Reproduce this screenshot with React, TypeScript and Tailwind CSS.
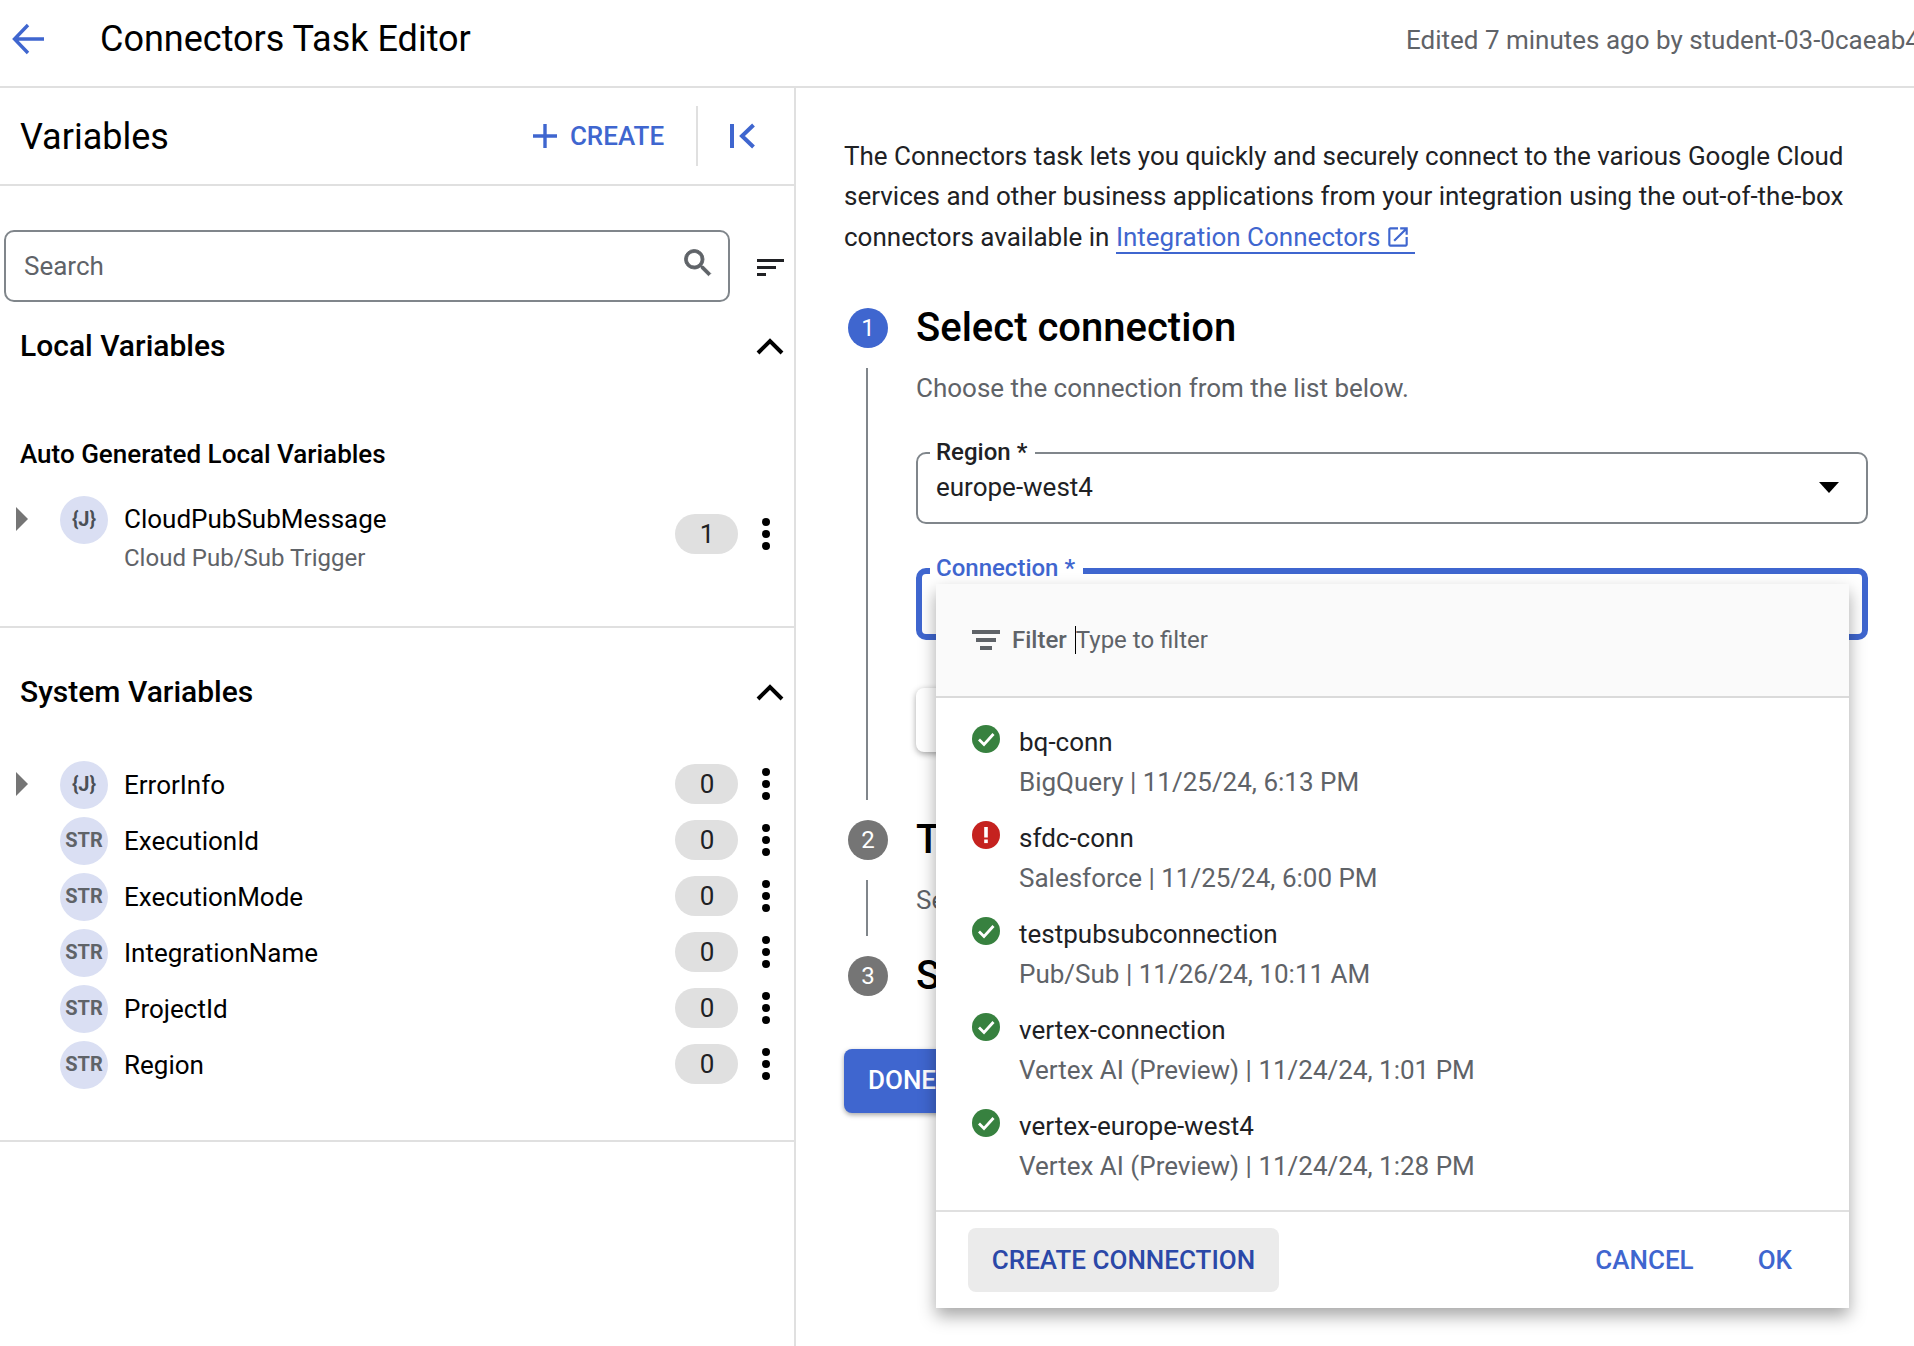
import { ReactNode } from 'react';

const systemVars = [
  { type: 'json', name: 'ErrorInfo' },
  { type: 'str', name: 'ExecutionId' },
  { type: 'str', name: 'ExecutionMode' },
  { type: 'str', name: 'IntegrationName' },
  { type: 'str', name: 'ProjectId' },
  { type: 'str', name: 'Region' },
];

const connections = [
  { name: 'bq-conn', detail: 'BigQuery | 11/25/24, 6:13 PM', ok: true },
  { name: 'sfdc-conn', detail: 'Salesforce | 11/25/24, 6:00 PM', ok: false },
  { name: 'testpubsubconnection', detail: 'Pub/Sub | 11/26/24, 10:11 AM', ok: true },
  { name: 'vertex-connection', detail: 'Vertex AI (Preview) | 11/24/24, 1:01 PM', ok: true },
  { name: 'vertex-europe-west4', detail: 'Vertex AI (Preview) | 11/24/24, 1:28 PM', ok: true },
];

function ChevronUp() {
  return (
    <svg width="28" height="18" viewBox="0 0 28 18" fill="none" className="mt-[2px] shrink-0">
      <path d="M2 16 L14 4 L26 16" stroke="#000" strokeWidth="4" />
    </svg>
  );
}

function Caret() {
  return (
    <svg width="12" height="24" viewBox="0 0 12 24" className="shrink-0">
      <path d="M0 0 L12 12 L0 24 Z" fill="#757575" />
    </svg>
  );
}

function Dots() {
  return (
    <div className="flex h-[32px] w-[8px] flex-col justify-between">
      <div className="h-[8px] w-[8px] rounded-full bg-black" />
      <div className="h-[8px] w-[8px] rounded-full bg-black" />
      <div className="h-[8px] w-[8px] rounded-full bg-black" />
    </div>
  );
}

function TypeBadge({ type }: { type: string }) {
  return (
    <div className="flex h-[48px] w-[48px] shrink-0 items-center justify-center rounded-full bg-[#dadff3] pb-[2px] text-[#4a4f55]">
      {type === 'json' ? (
        <span className="text-[20px] font-bold">{'{J}'}</span>
      ) : (
        <span className="text-[20px] font-bold text-[#5f6368]">STR</span>
      )}
    </div>
  );
}

function Pill({ value }: { value: number }) {
  return (
    <div className="flex h-[40px] w-[63px] items-center justify-center rounded-[20px] bg-[#e0e0e0] pl-[1px] text-[26px] text-[#202124]">
      {value}
    </div>
  );
}

function Field({ label, focused, children }: { label: string; focused?: boolean; children?: ReactNode }) {
  return (
    <div
      className={
        focused
          ? 'relative h-[72px] w-[952px] rounded-[10px] border-[6px] border-[#3f66cf]'
          : 'relative h-[72px] w-[952px] rounded-[10px] border-2 border-[#80868b]'
      }
    >
      <span
        className={
          focused
            ? 'absolute -top-[20px] left-[8px] bg-white pl-[6px] pr-[8px] text-[24px] leading-[28px] font-medium text-[#3f66cf]'
            : 'absolute -top-[16px] left-[12px] bg-white pl-[6px] pr-[8px] text-[24px] leading-[28px] font-medium text-[#202124]'
        }
      >
        {label}
      </span>
      {children}
    </div>
  );
}

function StepCircle({ n, active }: { n: number; active?: boolean }) {
  return (
    <div
      className={
        active
          ? 'flex h-[40px] w-[40px] shrink-0 items-center justify-center rounded-full bg-[#3f66cf] text-[24px] text-white'
          : 'flex h-[40px] w-[40px] shrink-0 items-center justify-center rounded-full bg-[#757575] text-[24px] text-white'
      }
    >
      {n}
    </div>
  );
}

function StatusIcon({ ok }: { ok: boolean }) {
  if (ok) {
    return (
      <svg width="28" height="28" viewBox="0 0 28 28" className="mt-[3px] shrink-0">
        <circle cx="14" cy="14" r="14" fill="#37813f" />
        <path d="M7 14.5 L12 19.5 L21.5 9" fill="none" stroke="#fff" strokeWidth="2.8" />
      </svg>
    );
  }
  return (
    <svg width="28" height="28" viewBox="0 0 28 28" className="mt-[3px] shrink-0">
      <circle cx="14" cy="14" r="14" fill="#c5221f" />
      <rect x="12.2" y="6" width="3.6" height="10.5" fill="#fff" />
      <rect x="12.2" y="18.5" width="3.6" height="3.6" fill="#fff" />
    </svg>
  );
}

export default function App() {
  return (
    <div className="h-[1346px] w-[1914px] overflow-hidden bg-white font-['Roboto',sans-serif] text-black">
      {/* top bar */}
      <header className="flex h-[88px] items-center border-b-2 border-[#e0e0e0] pb-[8px] pl-[12px]">
        <svg width="32" height="32" viewBox="0 0 32 32" fill="none" className="shrink-0">
          <path d="M32 16 H3 M16 2 L2.5 16 L16 30" stroke="#3f66cf" strokeWidth="3.4" />
        </svg>
        <h1 className="ml-[56px] text-[36px] whitespace-nowrap">Connectors Task Editor</h1>
        <span className="ml-auto w-[508px] shrink-0 overflow-hidden pt-[2px] text-[26px] whitespace-nowrap text-[#5f6368]">
          Edited 7 minutes ago by student-03-0caeab4d1b5f@qwiklabs.net
        </span>
      </header>

      <div className="flex h-[1258px]">
        {/* variables panel */}
        <aside className="w-[796px] shrink-0 border-r-2 border-[#e0e0e0]">
          <div className="flex h-[98px] items-center border-b-2 border-[#e0e0e0] pl-[20px]">
            <h2 className="pt-[2px] text-[36px]">Variables</h2>
            <svg width="24" height="24" viewBox="0 0 24 24" className="ml-[364px] shrink-0">
              <path d="M10.3 0h3.4v10.3H24v3.4H13.7V24h-3.4V13.7H0v-3.4h10.3z" fill="#3f66cf" />
            </svg>
            <span className="ml-[13px] text-[26px] font-medium text-[#3f66cf]">CREATE</span>
            <div className="ml-[32px] h-[60px] w-[2px] bg-[#e0e0e0]" />
            <svg width="25" height="26" viewBox="0 0 25 26" fill="none" className="ml-[32px] shrink-0">
              <path d="M2 1 V25" stroke="#3f66cf" strokeWidth="4" />
              <path d="M23.5 2 L12 13 L23.5 24" stroke="#3f66cf" strokeWidth="4" />
            </svg>
          </div>

          <div className="mt-[44px] flex items-center pl-[4px]">
            <div className="flex h-[72px] w-[726px] items-center justify-between rounded-[10px] border-2 border-[#80868b] pr-[12px] pl-[18px]">
              <span className="text-[26px] text-[#5f6368]">Search</span>
              <svg width="36" height="36" viewBox="0 0 24 24" className="mt-[-6px]">
                <path
                  d="M15.5 14h-.79l-.28-.27A6.47 6.47 0 0 0 16 9.5 6.5 6.5 0 1 0 9.5 16c1.61 0 3.09-.59 4.23-1.57l.27.28v.79l5 4.99L20.49 19l-4.99-5zm-6 0C7.01 14 5 11.99 5 9.5S7.01 5 9.5 5 14 7.01 14 9.5 11.99 14 9.5 14z"
                  fill="#5f6368"
                  stroke="#5f6368"
                  strokeWidth="0.6"
                />
              </svg>
            </div>
            <div className="mt-[2px] ml-[27px] flex flex-col gap-[4px]">
              <div className="h-[3px] w-[27px] bg-[#202124]" />
              <div className="h-[3px] w-[19px] bg-[#202124]" />
              <div className="h-[3px] w-[9px] bg-[#202124]" />
            </div>
          </div>

          <div className="mt-[23px] flex h-[40px] items-center justify-between pr-[10px] pl-[20px]">
            <h3 className="text-[30px] font-medium">Local Variables</h3>
            <ChevronUp />
          </div>

          <p className="mt-[74px] pl-[20px] text-[26px] leading-[30px] font-medium">Auto Generated Local Variables</p>

          <div className="mt-[27px] flex h-[76px] items-start">
            <div className="flex h-[46px] w-[60px] shrink-0 items-center pl-[16px]">
              <Caret />
            </div>
            <TypeBadge type="json" />
            <div className="ml-[16px] w-[551px] pt-[7px]">
              <p className="text-[26px] leading-[32px]">CloudPubSubMessage</p>
              <p className="mt-[7px] text-[24px] leading-[32px] text-[#5f6368]">Cloud Pub/Sub Trigger</p>
            </div>
            <div className="mt-[18px] flex items-center">
              <Pill value={1} />
              <div className="ml-[24px]">
                <Dots />
              </div>
            </div>
          </div>

          <div className="mt-[54px] h-[2px] bg-[#e0e0e0]" />

          <div className="mt-[43px] flex h-[40px] items-center justify-between pr-[10px] pl-[20px]">
            <h3 className="text-[30px] font-medium">System Variables</h3>
            <ChevronUp />
          </div>

          <div className="mt-[46px]">
            {systemVars.map((v) => (
              <div key={v.name} className="flex h-[56px] items-center">
                <div className="mb-[3px] flex w-[60px] shrink-0 items-center pl-[16px]">
                  {v.type === 'json' && <Caret />}
                </div>
                <TypeBadge type={v.type} />
                <span className="ml-[16px] w-[551px] text-[26px]">{v.name}</span>
                <div className="mb-[2px] flex items-center">
                  <Pill value={0} />
                  <div className="ml-[24px]">
                    <Dots />
                  </div>
                </div>
              </div>
            ))}
          </div>

          <div className="mt-[47px] h-[2px] bg-[#e0e0e0]" />
        </aside>

        {/* task form */}
        <main className="relative flex-1 pt-[48px] pl-[48px]">
          <p className="w-[1010px] text-[26px] leading-[40.33px] text-[#202124]">
            The Connectors task lets you quickly and securely connect to the various Google Cloud services and other
            business applications from your integration using the out-of-the-box connectors available in{' '}
            <span className="inline-flex items-center gap-[5px] border-b-2 border-[#3f66cf] pr-[4px] leading-[30px] text-[#3f66cf]">
              Integration Connectors
              <svg width="26" height="26" viewBox="0 0 24 24" className="shrink-0">
                <path
                  d="M19 19H5V5h7V3H5c-1.11 0-2 .9-2 2v14c0 1.1.89 2 2 2h14c1.1 0 2-.9 2-2v-7h-2v7zM14 3v2h3.59l-9.83 9.83 1.41 1.41L19 6.41V10h2V3h-7z"
                  fill="#3f66cf"
                />
              </svg>
            </span>
          </p>

          <div className="mt-[51px] ml-[4px] flex h-[40px] items-center gap-[28px]">
            <StepCircle n={1} active />
            <h2 className="text-[40px] font-medium">Select connection</h2>
          </div>
          <div className="mt-[20px] ml-[4px] flex h-[432px]">
            <div className="ml-[18px] h-full w-[2px] bg-[#80868b]" />
            <div className="ml-[48px]">
              <p className="text-[26px] leading-[40px] text-[#5f6368]">Choose the connection from the list below.</p>
              <div className="mt-[44px]">
                <Field label="Region *">
                  <div className="flex h-full items-center justify-between pr-[27px] pl-[18px]">
                    <span className="text-[26px] text-[#202124]">europe-west4</span>
                    <div className="h-0 w-0 border-x-[10px] border-t-[11px] border-x-transparent border-t-black" />
                  </div>
                </Field>
              </div>
              <div className="mt-[44px]">
                <Field label="Connection *" focused />
              </div>
              <div className="mt-[48px] h-[64px] w-[120px] rounded-[8px] bg-white shadow-[0_2px_6px_rgba(0,0,0,0.35)]" />
            </div>
          </div>

          <div className="mt-[20px] ml-[4px] flex h-[40px] items-center gap-[28px]">
            <StepCircle n={2} />
            <h2 className="text-[40px] font-medium">Type</h2>
          </div>
          <div className="mt-[20px] ml-[4px] flex h-[56px]">
            <div className="ml-[18px] h-full w-[2px] bg-[#80868b]" />
            <p className="ml-[48px] text-[26px] leading-[40px] text-[#5f6368]">Select the type</p>
          </div>
          <div className="mt-[20px] ml-[4px] flex h-[40px] items-center gap-[28px]">
            <StepCircle n={3} />
            <h2 className="text-[40px] font-medium">Set</h2>
          </div>

          <button className="mt-[53px] flex h-[64px] w-[130px] items-center rounded-[8px] bg-[#3f66cf] pl-[24px] text-[26px] font-medium text-white shadow-[0_2px_5px_rgba(0,0,0,0.35)]">
            DONE
          </button>

          {/* connection picker */}
          <div className="absolute top-[496px] left-[140px] flex h-[724px] w-[913px] flex-col bg-white shadow-[0_8px_16px_rgba(0,0,0,0.35)]">
            <div className="flex h-[114px] items-center border-b-2 border-[#dadada] bg-[#fafafa] pl-[36px]">
              <div className="flex flex-col items-center gap-[4px]">
                <div className="h-[4px] w-[28px] bg-[#5f6368]" />
                <div className="h-[4px] w-[20px] bg-[#5f6368]" />
                <div className="h-[4px] w-[12px] bg-[#5f6368]" />
              </div>
              <span className="ml-[12px] text-[24px] font-medium text-[#5f6368]">Filter</span>
              <div className="ml-[8px] h-[28px] w-px bg-black" />
              <span className="text-[24px] text-[#5f6368]">Type to filter</span>
            </div>
            <div className="flex-1 pt-[24px]">
              {connections.map((c) => (
                <div key={c.name} className="flex h-[96px] pl-[36px]">
                  <StatusIcon ok={c.ok} />
                  <div className="ml-[19px]">
                    <p className="text-[26px] leading-[40px] text-[#202124]">{c.name}</p>
                    <p className="text-[26px] leading-[40px] text-[#5f6368]">{c.detail}</p>
                  </div>
                </div>
              ))}
            </div>
            <div className="flex h-[98px] items-center border-t-2 border-[#e0e0e0] pr-[57px] pl-[32px]">
              <button className="flex h-[64px] w-[311px] items-center justify-center rounded-[8px] bg-[#ebebeb] text-[26px] font-medium text-[#2b48a8]">
                CREATE CONNECTION
              </button>
              <span className="ml-auto text-[26px] font-medium text-[#3f66cf]">CANCEL</span>
              <span className="ml-[64px] text-[26px] font-medium text-[#3f66cf]">OK</span>
            </div>
          </div>
        </main>
      </div>
    </div>
  );
}
